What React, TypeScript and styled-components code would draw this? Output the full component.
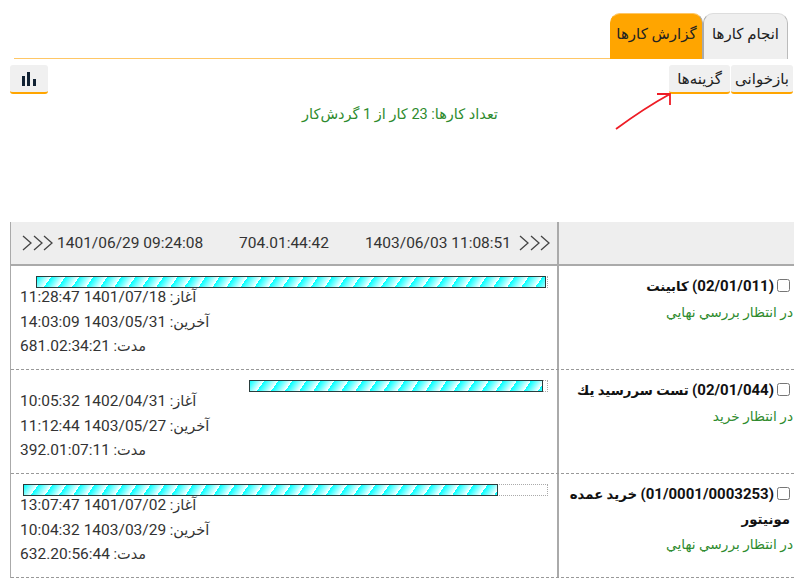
import * as React from 'react';
import styled, { createGlobalStyle } from 'styled-components';

const orange = '#ffa500';
const fontStack = 'Roboto, "Noto Sans", "DejaVu Sans", sans-serif';

const jobs = [
  {
    id: 1,
    title: '(02/01/011)',
    name: 'کابینت',
    status: 'در انتظار بررسي نهايي',
    left: 25,
    trackWidth: 512,
    fillWidth: 510,
    start: '1401/07/18 11:28:47',
    last: '1403/05/31 14:03:09',
    duration: '681.02:34:21',
  },
  {
    id: 2,
    title: '(02/01/044)',
    name: 'تست سررسید يك',
    status: 'در انتظار خريد',
    left: 238,
    trackWidth: 299,
    fillWidth: 294,
    start: '1402/04/31 10:05:32',
    last: '1403/05/27 11:12:44',
    duration: '392.01:07:11',
  },
  {
    id: 3,
    title: '(01/0001/0003253)',
    name: 'خريد عمده مونيتور',
    status: 'در انتظار بررسي نهايي',
    left: 12,
    trackWidth: 525,
    fillWidth: 475,
    start: '1401/07/02 13:07:47',
    last: '1403/03/29 10:04:32',
    duration: '632.20:56:44',
  },
];

const GlobalStyle = createGlobalStyle`
  html, body {
    margin: 0;
    padding: 0;
    background: #fff;
    overflow: hidden;
  }
  body {
    font-family: ${fontStack};
    font-size: 15px;
    color: #222;
  }
`;

const Page = styled.div`
  direction: rtl;
  height: 585px;
  overflow: hidden;
  padding-top: 13px;
  box-sizing: border-box;
`;

const TabBar = styled.div`
  display: flex;
  height: 46px;
  margin: 0 12px 0 14px;
  box-sizing: border-box;
  border-bottom: 1px solid #ffc766;
`;

const Tab = styled.div<{ $active?: boolean }>`
  height: 46px;
  width: ${p => (p.$active ? '93px' : '85px')};
  box-sizing: border-box;
  display: flex;
  align-items: center;
  justify-content: center;
  padding-bottom: 5px;
  background: ${p => (p.$active ? orange : '#efefef')};
  border-top: 1px solid ${p => (p.$active ? '#ffc766' : '#ddd')};
  border-left: 1px solid ${p => (p.$active ? orange : '#aaa')};
  border-right: 1px solid ${p => (p.$active ? '#aaa' : '#bbb')};
  border-radius: 10px 10px 0 0;
  font-size: 15px;
`;

const Toolbar = styled.div`
  display: flex;
  align-items: flex-start;
  gap: 1px;
  padding: 6px 7px 0 10px;
`;

const ToolButton = styled.div<{ $width: number }>`
  height: 29px;
  width: ${p => p.$width}px;
  box-sizing: border-box;
  display: flex;
  align-items: center;
  justify-content: center;
  background: #f0f0f0;
  border-bottom: 2px solid ${orange};
  border-radius: 3px;
  font-size: 15px;
`;

const ToolSpacer = styled.div`
  flex: 1;
`;

const Annotation = styled.svg`
  position: absolute;
  left: 610px;
  top: 90px;
`;

const Summary = styled.div`
  text-align: center;
  color: #2e8b2e;
  font-size: 14.5px;
  line-height: 20px;
  margin-top: 11px;
`;

const Table = styled.div`
  margin: 97px 6px 0 10px;
  border-left: 1px solid #aaa;
`;

const Row = styled.div<{ $header?: boolean }>`
  display: grid;
  grid-template-columns: 237px 1fr;
  height: ${p => (p.$header ? '44px' : '104px')};
  box-sizing: border-box;
  background: ${p => (p.$header ? '#eee' : 'transparent')};
  border-bottom: ${p => (p.$header ? '2px solid #aaa' : '1px dashed #999')};
`;

const NameCell = styled.div`
  border-left: 2px solid #aaa;
  padding: 9px 1px 0 0;
  line-height: 24.5px;
`;

const TimeCell = styled.div`
  padding: 10px 0 0 0;
  direction: ltr;
  min-width: 0;
`;

const HeaderTimes = styled.div`
  height: 100%;
  display: flex;
  align-items: center;
  justify-content: space-between;
  padding: 0 7px 0 11px;
  direction: ltr;
  font-size: 15.5px;
  color: #333;
`;

const TimeGroup = styled.span<{ $gap: number }>`
  display: flex;
  align-items: center;
  gap: ${p => p.$gap}px;
`;

const Chevrons = styled.svg`
  display: block;
`;

const Track = styled.div`
  height: 12px;
  box-sizing: border-box;
  border: 1px dotted #aaa;
`;

const Fill = styled.div`
  height: 12px;
  margin: -1px 0 0 -1px;
  box-sizing: border-box;
  border: 1px solid #2a3c3c;
  background: repeating-linear-gradient(125deg, #00ffff 0, #ffffff 11.5px);
`;

const Stat = styled.div`
  direction: rtl;
  text-align: left;
  padding-left: 9px;
  line-height: 24.7px;
  font-size: 14.5px;
  color: #333;
`;

const StatValue = styled.span`
  font-size: 15.5px;
  line-height: 1;
`;

const Stats = styled.div`
  margin-top: -2px;
`;

const Title = styled.div`
  padding-right: 3px;
  font-weight: bold;
  color: #111;
  font-size: 13.3px;
`;

const TitleCode = styled.span`
  font-size: 15px;
  line-height: 1;
`;

const Check = styled.input`
  width: 13px;
  height: 13px;
  margin: 0 0 0 3px;
  vertical-align: -1px;
`;

const Status = styled.div`
  color: #2e8b2e;
  font-size: 13.7px;
`;

const ChevronIcon = () => (
  <Chevrons width="31" height="18" viewBox="0 0 31 18" fill="none" stroke="#444" strokeWidth="1.3">
    <path d="M1 2l8 7-8 7M12 2l8 7-8 7M22 2l8 7-8 7" />
  </Chevrons>
);

const ChartIcon = () => (
  <svg width="14" height="14" viewBox="0 0 14 14" fill="#123">
    <rect x="0" y="4" width="3" height="10" />
    <rect x="5" y="0" width="3" height="14" />
    <rect x="11" y="7" width="3" height="7" />
  </svg>
);

export default function App() {
  return (
    <Page>
      <GlobalStyle />
      <TabBar>
        <Tab>انجام کارها</Tab>
        <Tab $active>گزارش کارها</Tab>
      </TabBar>
      <Toolbar>
        <ToolButton $width={62}>بازخوانی</ToolButton>
        <ToolButton $width={61}>گزینه‌ها</ToolButton>
        <ToolSpacer />
        <ToolButton $width={38}>
          <ChartIcon />
        </ToolButton>
      </Toolbar>
      <Annotation width="70" height="45" viewBox="0 0 70 45" fill="none" stroke="#ee1c25" strokeWidth="1.8">
        <path d="M6 39C25 25 40 15 60 4M47 4h13v11" />
      </Annotation>
      <Summary>تعداد کارها: 23 کار از 1 گردش‌کار</Summary>
      <Table>
        <Row $header>
          <NameCell />
          <HeaderTimes>
            <TimeGroup $gap={4}>
              <ChevronIcon />
              1401/06/29 09:24:08
            </TimeGroup>
            <span>704.01:44:42</span>
            <TimeGroup $gap={8}>
              1403/06/03 11:08:51
              <ChevronIcon />
            </TimeGroup>
          </HeaderTimes>
        </Row>
        {jobs.map(job => (
          <Row key={job.id}>
            <NameCell>
              <Title>
                <Check type="checkbox" />
                <TitleCode>{job.title}</TitleCode> {job.name}
              </Title>
              <Status>{job.status}</Status>
            </NameCell>
            <TimeCell>
              <Track style={{ marginLeft: job.left, width: job.trackWidth }}>
                <Fill style={{ width: job.fillWidth }} />
              </Track>
              <Stats>
                <Stat>
                  آغاز: <StatValue>{job.start}</StatValue>
                </Stat>
                <Stat>
                  آخرین: <StatValue>{job.last}</StatValue>
                </Stat>
                <Stat>
                  مدت: <StatValue>{job.duration}</StatValue>
                </Stat>
              </Stats>
            </TimeCell>
          </Row>
        ))}
      </Table>
    </Page>
  );
}
